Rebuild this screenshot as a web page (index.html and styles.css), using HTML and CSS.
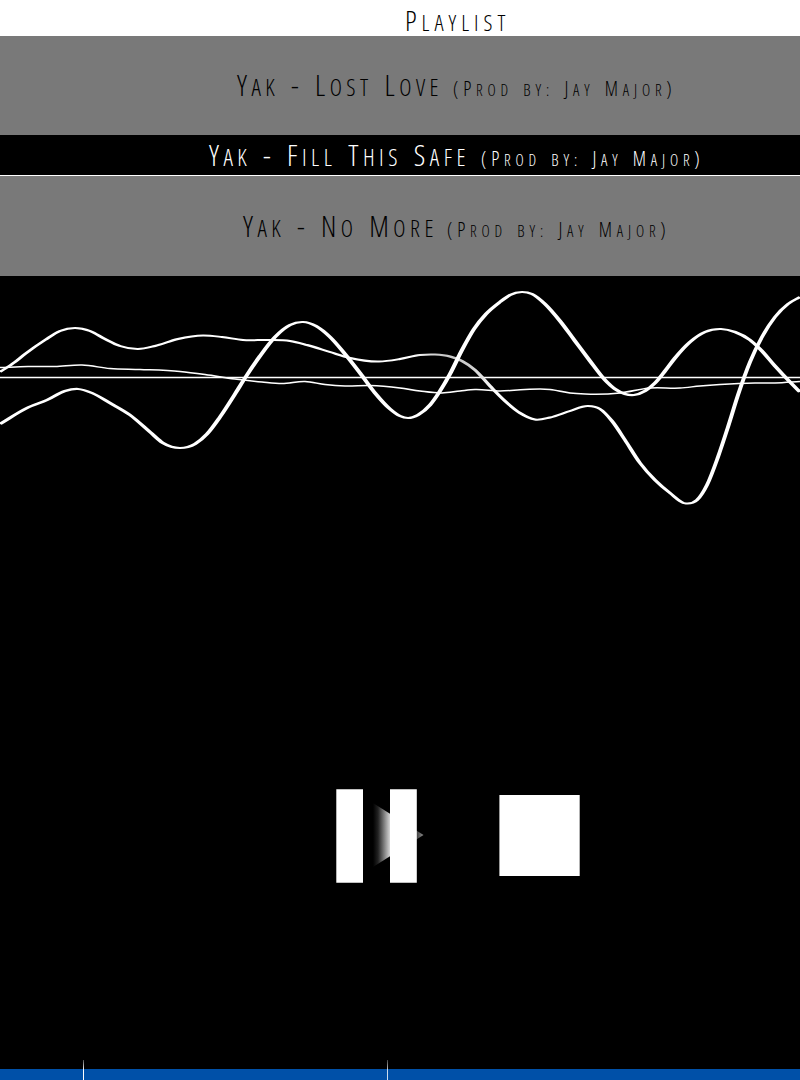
FILE: index.html
```html
<!DOCTYPE html>
<html lang="en">
<head>
<meta charset="utf-8">
<title>Playlist</title>
<link rel="stylesheet" href="styles.css">
</head>
<body>
<h1 class="heading"><span class="word">Playlist</span></h1>
<ul class="tracks">
  <li class="track"><span class="title title-lost"><span class="word">Yak</span> - <span class="word">Lost</span> <span class="word">Love</span></span><span class="credit"><span class="paren">(</span><span class="word">Prod</span> <span class="low">by:</span> <span class="word">Jay</span> <span class="word">Major</span>)</span></li>
  <li class="track active"><span class="title title-safe"><span class="word">Yak</span> - <span class="word">Fill</span> <span class="word">This</span> <span class="word">Safe</span></span><span class="credit"><span class="paren">(</span><span class="word">Prod</span> <span class="low">by:</span> <span class="word">Jay</span> <span class="word">Major</span>)</span></li>
  <li class="track last"><span class="title title-more"><span class="word">Yak</span> - <span class="word">No</span> <span class="word">More</span></span><span class="credit"><span class="paren">(</span><span class="word">Prod</span> <span class="low">by:</span> <span class="word">Jay</span> <span class="word">Major</span>)</span></li>
</ul>
<main class="player">
  <svg class="wave" viewBox="0 276 400 244" preserveAspectRatio="none">
    <defs><linearGradient id="fade" gradientUnits="userSpaceOnUse" x1="205" y1="0" x2="248" y2="0"><stop offset="0" stop-color="#fff"/><stop offset=".35" stop-color="#c8c8c8"/><stop offset=".7" stop-color="#ccc"/><stop offset="1" stop-color="#fff"/></linearGradient></defs>
    <path d="M0 377.5H400" stroke-width="1.4"/>
    <path id="c" stroke-width="1.5"/>
    <path id="a" stroke-width="2" stroke="url(#fade)"/>
    <path id="b" stroke-width="2.2"/>
  </svg>
  <div class="controls">
    <svg class="pause" width="90" height="94" viewBox="336 789 90 94">
      <defs><linearGradient id="play" gradientUnits="userSpaceOnUse" x1="373" y1="0" x2="423" y2="0"><stop offset="0" stop-color="#000"/><stop offset=".1" stop-color="#222"/><stop offset=".35" stop-color="#ddd"/><stop offset=".6" stop-color="#fff"/><stop offset=".88" stop-color="#444"/><stop offset="1" stop-color="#888"/></linearGradient></defs>
      <path d="M373 803L423.500 835L373 867Z" fill="url(#play)"/>
      <path d="M336.300 789.300H363V882.700H336.300ZM390 789.300H416.800V882.700H390Z" fill="#fff"/>
    </svg>
    <svg class="stop" width="81" height="81" viewBox="0 0 81 81"><path d="M.4 0H80.700V81H.4Z" fill="#fff"/></svg>
  </div>
</main>
<footer class="timeline"><i class="tick first"></i><i class="tick second"></i></footer>
<script src="wave.js"></script>
</body>
</html>
```
FILE: styles.css
```css
body { margin: 0; height: 1080px; overflow: hidden; display: flex; flex-direction: column; background: #000; font-family: "Open Sans", sans-serif; font-weight: 300; font-stretch: 75%; }
.heading { margin: 0; box-sizing: border-box; height: 36px; padding-left: 405px; background: #fff; color: #000; font-size: 28px; line-height: 40px; font-weight: 300; letter-spacing: 5px; white-space: nowrap; }
.word { display: inline-block; font-size: .8em; text-transform: uppercase; }
.word::first-letter { font-size: 1.25em; }
.low { font-size: .84em; text-transform: uppercase; }
.tracks { margin: 0; padding: 0; list-style: none; color: #000; }
.track { box-sizing: border-box; height: 99px; padding-left: 237px; background: #797979; line-height: 97px; white-space: nowrap; font-size: 29px; letter-spacing: 4.500px; word-spacing: 1.800px; display: flex; align-items: baseline; }
.title { display: block; width: 216px; flex: none; }
.credit { font-size: 19.500px; letter-spacing: 4.800px; word-spacing: 2px; }
.active { height: 41px; line-height: 39px; padding-left: 209px; background: #000; border-bottom: 1px solid #fff; color: #fff; }
.title-safe { width: 272px; }
.last { height: 100px; line-height: 99px; padding-left: 243px; }
.title-more { width: 204px; }
.player { flex: 1; display: flex; flex-direction: column; }
.wave { display: block; width: 800px; height: 244px; fill: none; stroke: #fff; }
.controls { display: flex; align-items: flex-start; padding: 269px 0 0 336px; gap: 73px; }
.pause, .stop { display: block; }
.stop { margin-top: 6px; }
.timeline { position: relative; height: 11px; background: #0050a8; }
.tick { position: absolute; bottom: 0; width: 1px; height: 20px; background: linear-gradient(#555, #fff 50%); }
.first { left: 83px; }
.second { left: 387px; opacity: .8; }
```
FILE: wave.js
```js
const curves = {
  a: [0,372,15,362,25,354,45,340,60,331,75,328,90,331,105,339,120,346,138,349,155,346,178,339,203,335.5,222,337,243,340,268,340,290,341,307,345,330,352,350,358,379,361.5,400,359,420,355,435,354.5,450,356.5,462,361,475,370,490,386,505,401,520,413,535,419.5,550,417.5,570,411,588,406,600,409,612,421,625,440,640,463,655,480,670,493,686,503.5,697,500,707,485,718,457,728,427,738,395,750,362,762,337,775,317,788,304,800,297],
  b: [0,424,27,408,47,400,65,391,78,389,92,393,110,403,130,415,150,432,163,443,180,448,195,444,207,434,220,417,235,394,245,378,260,356,275,337,290,325,303,322,316,326,330,337,345,354,360,373,375,393,390,409,400,416,408,418,418,415,430,405,440,391,450,374,462,350,474,329,486,314,500,302,510,295,522,292,532,294,545,304,560,321,575,341,590,361,605,380,615,389,625,394,634,395,645,391,655,383,665,371,675,358,690,342,705,332,721,329,735,332,750,340,760,349,775,366,790,382,800,392],
  c: [0,367.5,28,366.5,55,366.5,82,365,110,368.5,140,369.5,180,371.5,205,374.5,235,379,262,382,282,383.5,305,381.5,325,384.5,345,386,370,385.5,400,388,420,391,442,393,460,391,475,389.5,500,391,525,389.5,550,389.5,570,393,585,394,620,393,650,388,680,388,700,386,720,384.5,755,383,775,383,800,381.5]
};

// Cubic segments whose slopes come from the neighbouring samples,
// weighted so that the nearer neighbour counts for more.
for (const [id, v] of Object.entries(curves)) {
  const p = [];
  for (let i = 0; i < v.length; i += 2) p.push([v[i] / 2, v[i + 1]]);
  const rise = i => (p[i + 1][1] - p[i][1]) / (p[i + 1][0] - p[i][0]);
  const slope = i => {
    if (i === 0) return rise(0);
    if (i === p.length - 1) return rise(i - 1);
    const l = p[i][0] - p[i - 1][0], r = p[i + 1][0] - p[i][0];
    return (rise(i - 1) * r + rise(i) * l) / (l + r);
  };
  let d = `M${p[0]}`;
  for (let i = 0; i < p.length - 1; i++) {
    const q = p[i], r = p[i + 1], h = (r[0] - q[0]) / 3;
    d += `C${q[0] + h} ${q[1] + h * slope(i)} ${r[0] - h} ${r[1] - h * slope(i + 1)} ${r}`;
  }
  document.getElementById(id).setAttribute('d', d);
}
```
